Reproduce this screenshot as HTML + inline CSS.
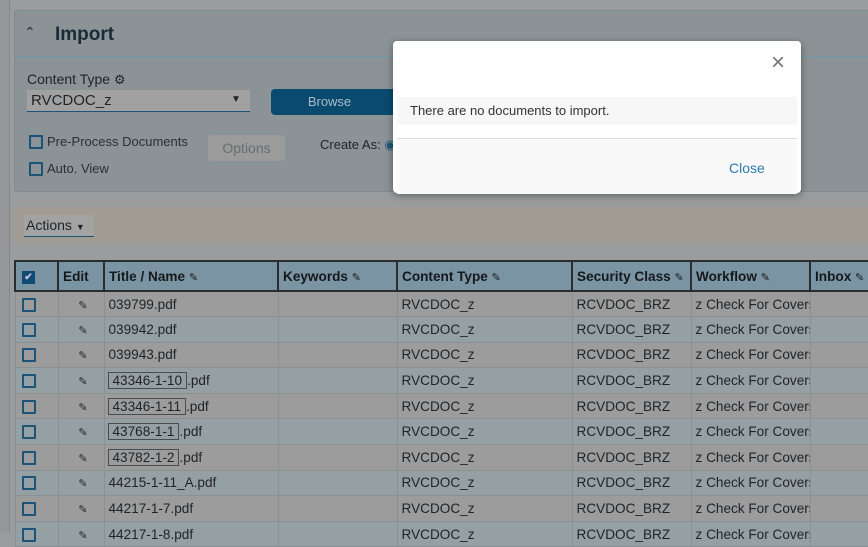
<!DOCTYPE html>
<html><head><style>
body{margin:0;width:868px;height:533px;overflow:hidden;background:#9a9c9d;font-family:"Liberation Sans",Arial,sans-serif;position:relative;font-size:14px;color:#1f2326}
.abs{position:absolute}
.cb{position:absolute;width:10px;height:10px;border:2px solid #1c5478;border-radius:1px}
table{border-collapse:collapse;position:absolute;left:14px;top:260px;table-layout:fixed;width:856px}
td,th{height:25.6px;padding:0 0 0 4px;border:1px solid #8d9092;white-space:nowrap;overflow:hidden;font-size:13.6px;text-align:left;box-sizing:border-box}
th{background:#7b94a3;border:2px solid #2a2d30;height:30px;font-weight:bold;color:#15191c}
tr.o td{background:#9c9c9c}
tr.e td{background:#95a0a5}
.pen{font-size:11px;font-weight:normal}
.bx{border:1px solid #4a4c4e;padding:0 4px;margin-left:-1px}
</style></head><body>
<div class="abs" style="left:0;top:0;width:9px;height:533px;background:#959799;border-right:1px solid #85888a"></div>
<div class="abs" style="left:14px;top:10px;width:860px;height:180px;background:#8b9396;border:1px solid #818a8d;border-radius:3px"></div>
<div class="abs" style="left:15px;top:56px;width:853px;height:1px;background:#6d98a8"></div>
<div class="abs" style="left:24px;top:24px;font-size:14px;color:#2d3236">&#8963;</div>
<div class="abs" style="left:55px;top:24px;font-size:19px;color:#1a2a36;font-weight:bold">Import</div>
<div class="abs" style="left:27px;top:71px;font-size:14px">Content Type <span style="font-size:13px">&#9881;</span></div>
<div class="abs" style="left:27px;top:90px;width:223px;height:21px;background:#a1a1a1;border-bottom:1px solid #1c5478"></div>
<div class="abs" style="left:31px;top:92px;font-size:15px">RVCDOC_z</div>
<div class="abs" style="left:231px;top:94px;font-size:10px">&#9660;</div>
<div class="abs" style="left:271px;top:89px;width:125px;height:26px;background:#0a4a6e;border-radius:4px 0 0 4px;color:#a8bccb;font-size:13px;line-height:26px;text-align:center;padding-right:8px;box-sizing:border-box">Browse</div>
<div class="cb" style="left:29px;top:135px"></div>
<div class="abs" style="left:47px;top:134px;font-size:13px;color:#2a2f33">Pre-Process Documents</div>
<div class="cb" style="left:29px;top:162px"></div>
<div class="abs" style="left:47px;top:161px;font-size:13px;color:#2a2f33">Auto. View</div>
<div class="abs" style="left:208px;top:135px;width:77px;height:26px;background:#9b9b9b;border-radius:3px;color:#6a6d70;font-size:14px;line-height:26px;text-align:center">Options</div>
<div class="abs" style="left:320px;top:137px;font-size:13px">Create As: <span style="color:#1c5478">&#9673;</span></div>
<div class="abs" style="left:14px;top:207px;width:854px;height:36px;background:#a09c94"></div>
<div class="abs" style="left:24px;top:215px;width:68px;height:21px;background:#a3a3a3;border-bottom:1px solid #1c5478;font-size:14px;line-height:21px;padding-left:2px">Actions <span style="font-size:9px">&#9660;</span></div>
<table>
<colgroup><col style="width:43px"><col style="width:46px"><col style="width:174px"><col style="width:119px"><col style="width:175px"><col style="width:119px"><col style="width:119px"><col style="width:61px"></colgroup>
<tr><th><span style="display:inline-block;width:13px;height:13px;background:#0e4c73;color:#cbd;font-size:10px;text-align:center;line-height:13px;margin-left:2px">&#10004;</span></th><th>Edit</th><th>Title / Name <span class="pen">&#9998;</span></th><th>Keywords <span class="pen">&#9998;</span></th><th>Content Type <span class="pen">&#9998;</span></th><th>Security Class <span class="pen">&#9998;</span></th><th>Workflow <span class="pen">&#9998;</span></th><th>Inbox <span class="pen">&#9998;</span></th></tr>
<tr class="o"><td><span class="cb" style="position:relative;display:inline-block;top:2px;left:2px"></span></td><td style="text-align:center"><span class="pen">&#9998;</span></td><td>039799.pdf</td><td></td><td>RVCDOC_z</td><td>RCVDOC_BRZ</td><td>z Check For Covers</td><td></td></tr>
<tr class="e"><td><span class="cb" style="position:relative;display:inline-block;top:2px;left:2px"></span></td><td style="text-align:center"><span class="pen">&#9998;</span></td><td>039942.pdf</td><td></td><td>RVCDOC_z</td><td>RCVDOC_BRZ</td><td>z Check For Covers</td><td></td></tr>
<tr class="o"><td><span class="cb" style="position:relative;display:inline-block;top:2px;left:2px"></span></td><td style="text-align:center"><span class="pen">&#9998;</span></td><td>039943.pdf</td><td></td><td>RVCDOC_z</td><td>RCVDOC_BRZ</td><td>z Check For Covers</td><td></td></tr>
<tr class="e"><td><span class="cb" style="position:relative;display:inline-block;top:2px;left:2px"></span></td><td style="text-align:center"><span class="pen">&#9998;</span></td><td><span class="bx">43346-1-10</span>.pdf</td><td></td><td>RVCDOC_z</td><td>RCVDOC_BRZ</td><td>z Check For Covers</td><td></td></tr>
<tr class="o"><td><span class="cb" style="position:relative;display:inline-block;top:2px;left:2px"></span></td><td style="text-align:center"><span class="pen">&#9998;</span></td><td><span class="bx">43346-1-11</span>.pdf</td><td></td><td>RVCDOC_z</td><td>RCVDOC_BRZ</td><td>z Check For Covers</td><td></td></tr>
<tr class="e"><td><span class="cb" style="position:relative;display:inline-block;top:2px;left:2px"></span></td><td style="text-align:center"><span class="pen">&#9998;</span></td><td><span class="bx">43768-1-1</span>.pdf</td><td></td><td>RVCDOC_z</td><td>RCVDOC_BRZ</td><td>z Check For Covers</td><td></td></tr>
<tr class="o"><td><span class="cb" style="position:relative;display:inline-block;top:2px;left:2px"></span></td><td style="text-align:center"><span class="pen">&#9998;</span></td><td><span class="bx">43782-1-2</span>.pdf</td><td></td><td>RVCDOC_z</td><td>RCVDOC_BRZ</td><td>z Check For Covers</td><td></td></tr>
<tr class="e"><td><span class="cb" style="position:relative;display:inline-block;top:2px;left:2px"></span></td><td style="text-align:center"><span class="pen">&#9998;</span></td><td>44215-1-11_A.pdf</td><td></td><td>RVCDOC_z</td><td>RCVDOC_BRZ</td><td>z Check For Covers</td><td></td></tr>
<tr class="o"><td><span class="cb" style="position:relative;display:inline-block;top:2px;left:2px"></span></td><td style="text-align:center"><span class="pen">&#9998;</span></td><td>44217-1-7.pdf</td><td></td><td>RVCDOC_z</td><td>RCVDOC_BRZ</td><td>z Check For Covers</td><td></td></tr>
<tr class="e"><td><span class="cb" style="position:relative;display:inline-block;top:2px;left:2px"></span></td><td style="text-align:center"><span class="pen">&#9998;</span></td><td>44217-1-8.pdf</td><td></td><td>RVCDOC_z</td><td>RCVDOC_BRZ</td><td>z Check For Covers</td><td></td></tr>
</table>
<div class="abs" style="left:393px;top:41px;width:408px;height:152px;background:#fff;border-radius:4px;box-shadow:0 2px 8px rgba(0,0,0,.4)">
<div class="abs" style="left:378px;top:8px;font-size:24px;color:#777;font-weight:300">&#215;</div>
<div class="abs" style="left:4px;top:56px;width:400px;height:28px;background:#f7f7f7;font-size:13px;line-height:28px;padding-left:13px;box-sizing:border-box;color:#333">There are no documents to import.</div>
<div class="abs" style="left:4px;top:97px;width:400px;height:55px;background:#f9f9f9;border-top:1px solid #ddd"></div>
<div class="abs" style="left:336px;top:119px;font-size:14px;color:#2a7bb0">Close</div>
</div>
</body></html>
